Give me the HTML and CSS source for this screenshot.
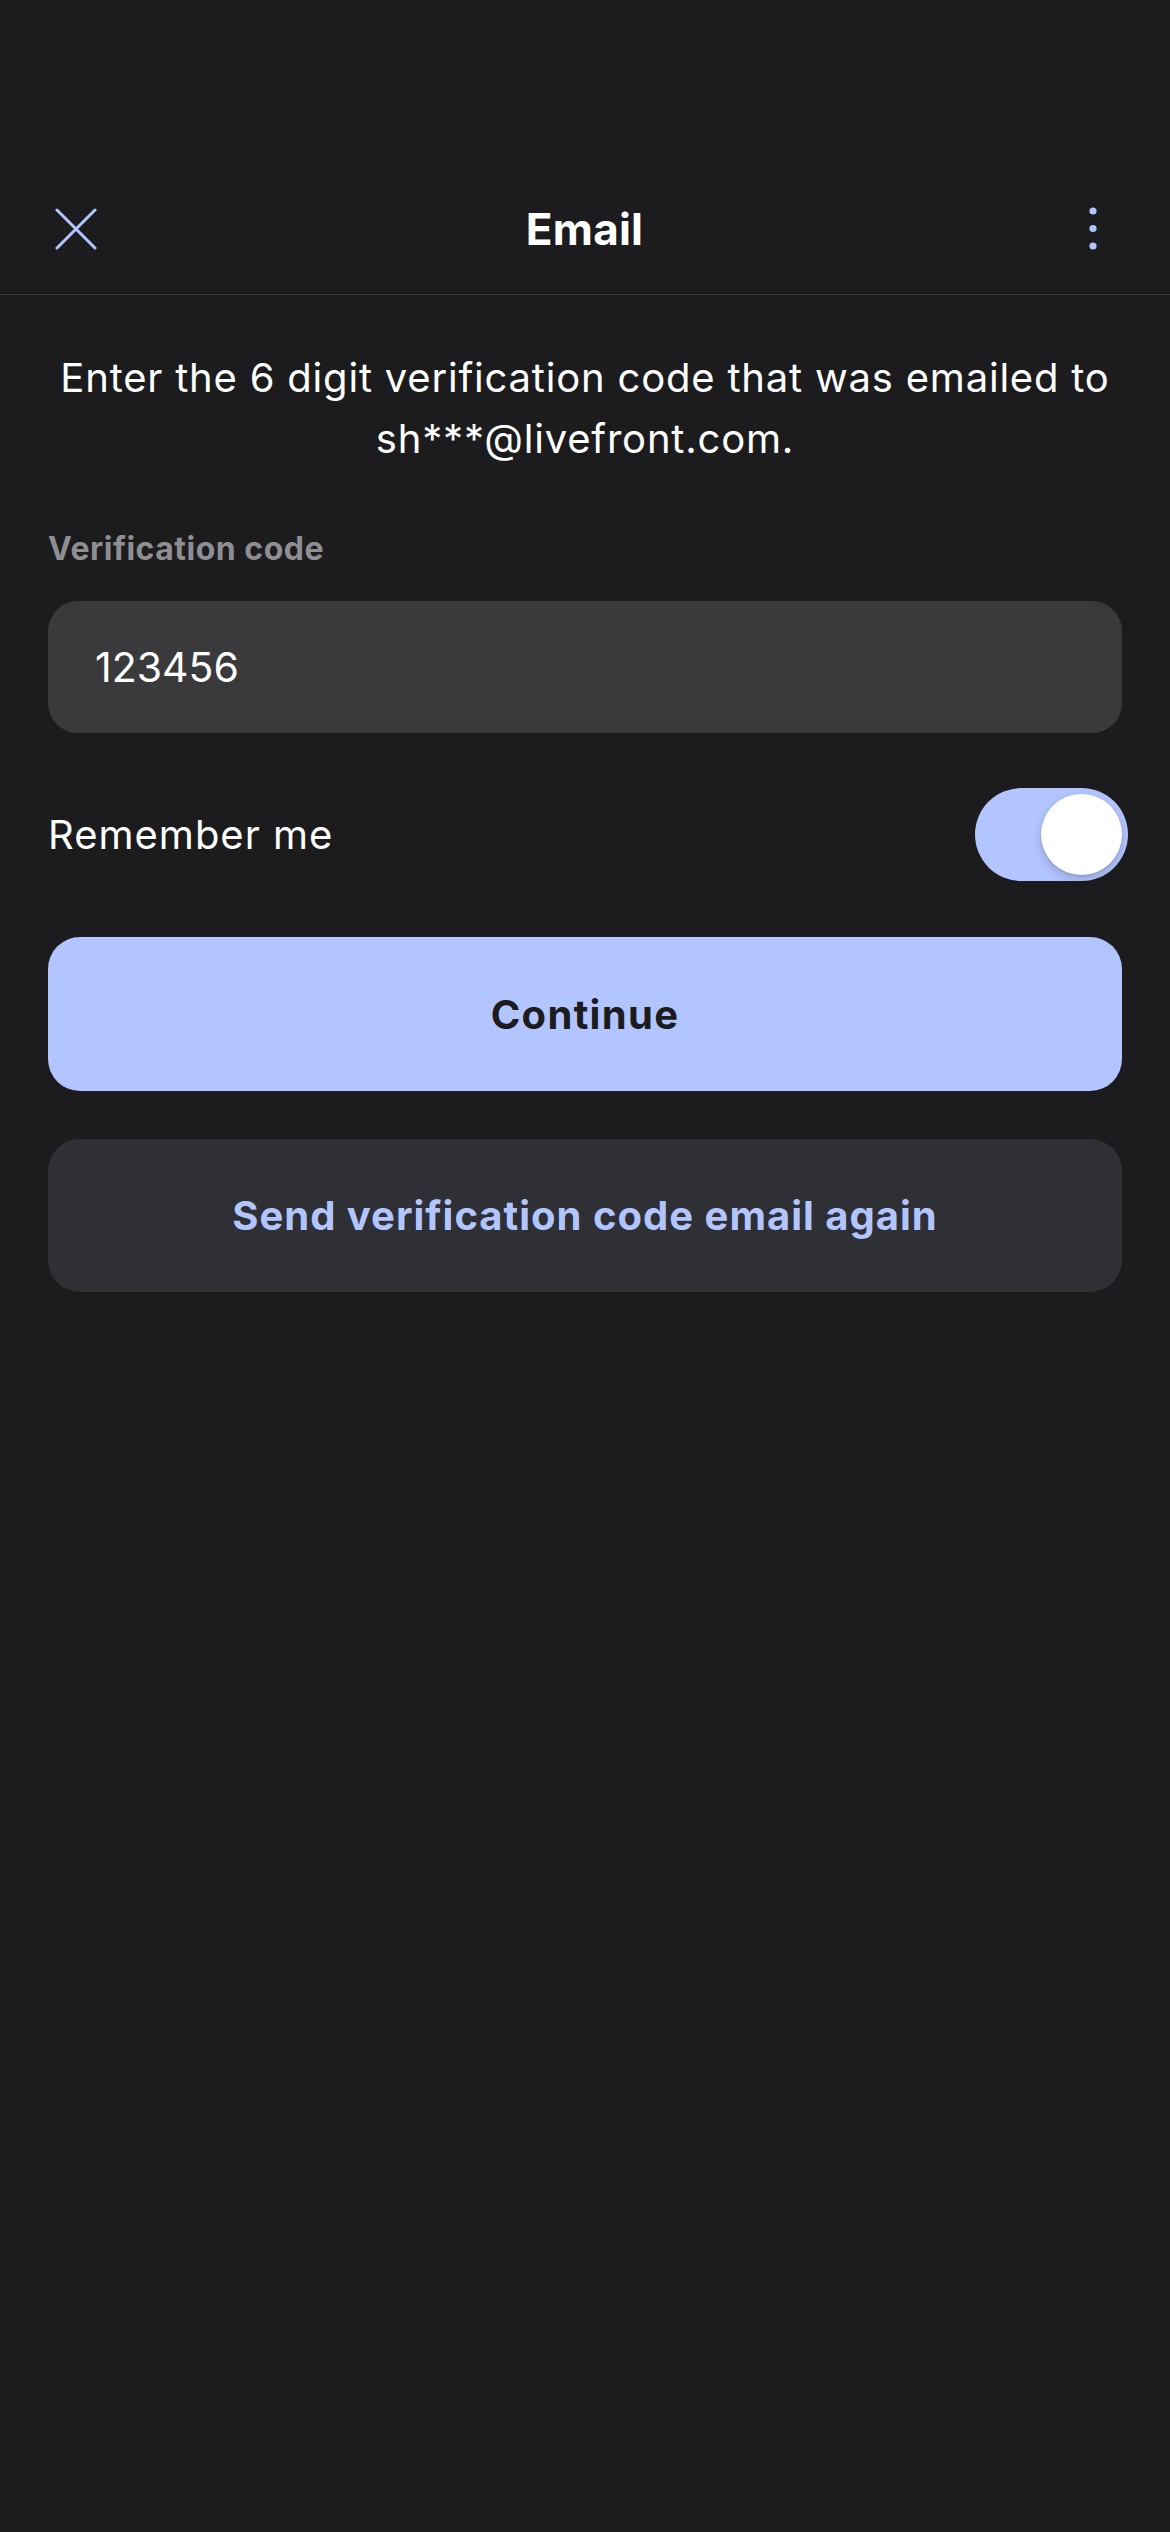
FILE: index.html
```html
<!DOCTYPE html>
<html lang="en">
<head>
<meta charset="utf-8">
<title>Email</title>
<link rel="stylesheet" href="styles.css">
</head>
<body>
<div class="screen">
  <div class="status-space"></div>
  <header class="topbar">
    <button class="icon-btn close" aria-label="Close">
      <svg width="42" height="42" viewBox="0 0 42 42"><path d="M2 2 L40 40 M40 2 L2 40" stroke="#b3c5ff" stroke-width="3" stroke-linecap="round" fill="none"/></svg>
    </button>
    <h1 class="title">Email</h1>
    <button class="icon-btn more" aria-label="More">
      <svg width="10" height="48" viewBox="0 0 10 48"><circle cx="5" cy="6" r="3.6" fill="#b3c5ff"/><circle cx="5" cy="23.5" r="3.6" fill="#b3c5ff"/><circle cx="5" cy="41" r="3.6" fill="#b3c5ff"/></svg>
    </button>
  </header>
  <main class="content">
    <p class="intro">Enter the 6 digit verification code that was emailed to sh***@livefront.com.</p>
    <label class="field-label">Verification code</label>
    <div class="field"><span class="field-value">123456</span></div>
    <div class="remember-row">
      <span class="remember-text">Remember me</span>
      <div class="switch"><div class="knob"></div></div>
    </div>
    <button class="btn btn-primary">Continue</button>
    <button class="btn btn-secondary">Send verification code email again</button>
  </main>
</div>
</body>
</html>
```
FILE: styles.css
```css
* { box-sizing: border-box; }
html, body {
  margin: 0;
  padding: 0;
  background: #1c1c1e;
}
body {
  font-family: Inter, "Noto Sans", "Liberation Sans", sans-serif;
  color: #ffffff;
  width: 1170px;
  min-height: 2532px;
}
.screen {
  display: flex;
  flex-direction: column;
}
.status-space { height: 164px; }
.topbar {
  height: 131px;
  border-bottom: 1px solid #3a3a3c;
  display: grid;
  grid-template-columns: 1fr auto 1fr;
  align-items: center;
  padding: 0 56px 1px 55px;
}
.icon-btn {
  background: none;
  border: 0;
  padding: 0;
  display: flex;
  align-items: center;
  justify-content: center;
}
.close { width: 42px; height: 42px; justify-self: start; }
.more { width: 42px; height: 48px; justify-self: end; }
.title {
  margin: 0;
  font-size: 44px;
  font-weight: 700;
  letter-spacing: 0.2px;
  line-height: 1;
}
.content {
  padding: 0 48px;
  display: flex;
  flex-direction: column;
}
.intro {
  margin: 52px -10px 0;
  font-size: 40px;
  line-height: 61px;
  text-align: center;
  font-weight: 400;
  letter-spacing: 0.8px;
}
.field-label {
  margin-top: 60px;
  font-size: 32px;
  line-height: 40px;
  font-weight: 700;
  color: #8e8e93;
  letter-spacing: 0.5px;
}
.field {
  margin-top: 32px;
  height: 132px;
  background: #3a3a3c;
  border-radius: 30px;
  display: flex;
  align-items: center;
  padding-left: 47px;
}
.field-value {
  font-size: 41px;
}
.remember-row {
  margin-top: 55px;
  height: 93px;
  display: flex;
  align-items: center;
  justify-content: space-between;
}
.remember-text {
  font-size: 40px;
  letter-spacing: 1px;
}
.switch {
  position: relative;
  width: 153px;
  height: 93px;
  border-radius: 47px;
  background: #b3c5ff;
  margin-right: -6px;
}
.knob {
  position: absolute;
  right: 6px;
  top: 6px;
  width: 81px;
  height: 81px;
  border-radius: 50%;
  background: #ffffff;
  box-shadow: 0 4px 10px rgba(0, 0, 0, 0.18), 0 1px 2px rgba(0, 0, 0, 0.1);
}
.btn {
  border: 0;
  border-radius: 32px;
  height: 154px;
  font-family: inherit;
  font-size: 40px;
  font-weight: 700;
  width: 100%;
}
.btn-primary {
  margin-top: 56px;
  background: #b3c5ff;
  color: #1c1c1e;
  letter-spacing: 1.3px;
}
.btn-secondary {
  margin-top: 48px;
  height: 153px;
  background: #2f3035;
  color: #b3c5ff;
  letter-spacing: 1px;
}
```
